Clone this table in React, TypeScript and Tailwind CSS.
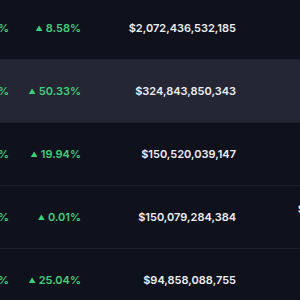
import React from 'react';

type Row = {
  h1: string;
  h24: string;
  cap: string;
  vol: string;
  volSub: string;
  hover?: boolean;
};

const rows: Row[] = [
  { h1: '0.42%', h24: '8.58%', cap: '$2,072,436,532,185', vol: '$6,114,272,839', volSub: '667,917 BTC' },
  { h1: '1.17%', h24: '50.33%', cap: '$324,843,850,343', vol: '$4,225,508,187', volSub: '1,522,006 ETH', hover: true },
  { h1: '0.05%', h24: '19.94%', cap: '$150,520,039,147', vol: '$9,861,903,204', volSub: '99,840 USDT' },
  { h1: '0.03%', h24: '0.01%', cap: '$150,079,284,384', vol: '$150,032,776,511', volSub: '2,581,334 BNB' },
  { h1: '0.88%', h24: '25.04%', cap: '$94,858,088,755', vol: '$7,458,210,664', volSub: '3,112,880 SOL' },
];

function Change({ value }: { value: string }) {
  return (
    <span className="flex items-center gap-[3px] text-[#3ecf7c]">
      <span className="text-[7px] leading-none">▲</span>
      {value}
    </span>
  );
}

export default function App() {
  return (
    <div
      className="w-[300px] h-[300px] overflow-hidden bg-[#0f111c] text-[11px] font-semibold"
      style={{ fontFamily: 'Inter, "Noto Sans", sans-serif' }}
    >
      <div className="-mt-[3px]">
        {rows.map((r) => (
          <div
            key={r.cap}
            className={`flex items-center h-[63px] border-b border-[#1d202c] whitespace-nowrap ${
              r.hover ? 'bg-[#242633]' : ''
            }`}
          >
            <div className="w-[9px] shrink-0 flex justify-end text-[#3ecf7c]">{r.h1}</div>
            <div className="w-[72px] shrink-0 flex justify-end">
              <Change value={r.h24} />
            </div>
            <div className="w-[155px] shrink-0 flex justify-end text-[#eceef3]">{r.cap}</div>
            <div className="w-[154px] shrink-0 flex flex-col items-end">
              <span className="text-[#eceef3]">{r.vol}</span>
              <span className="text-[10px] font-medium text-[#8a8fa3]">{r.volSub}</span>
            </div>
          </div>
        ))}
      </div>
    </div>
  );
}
